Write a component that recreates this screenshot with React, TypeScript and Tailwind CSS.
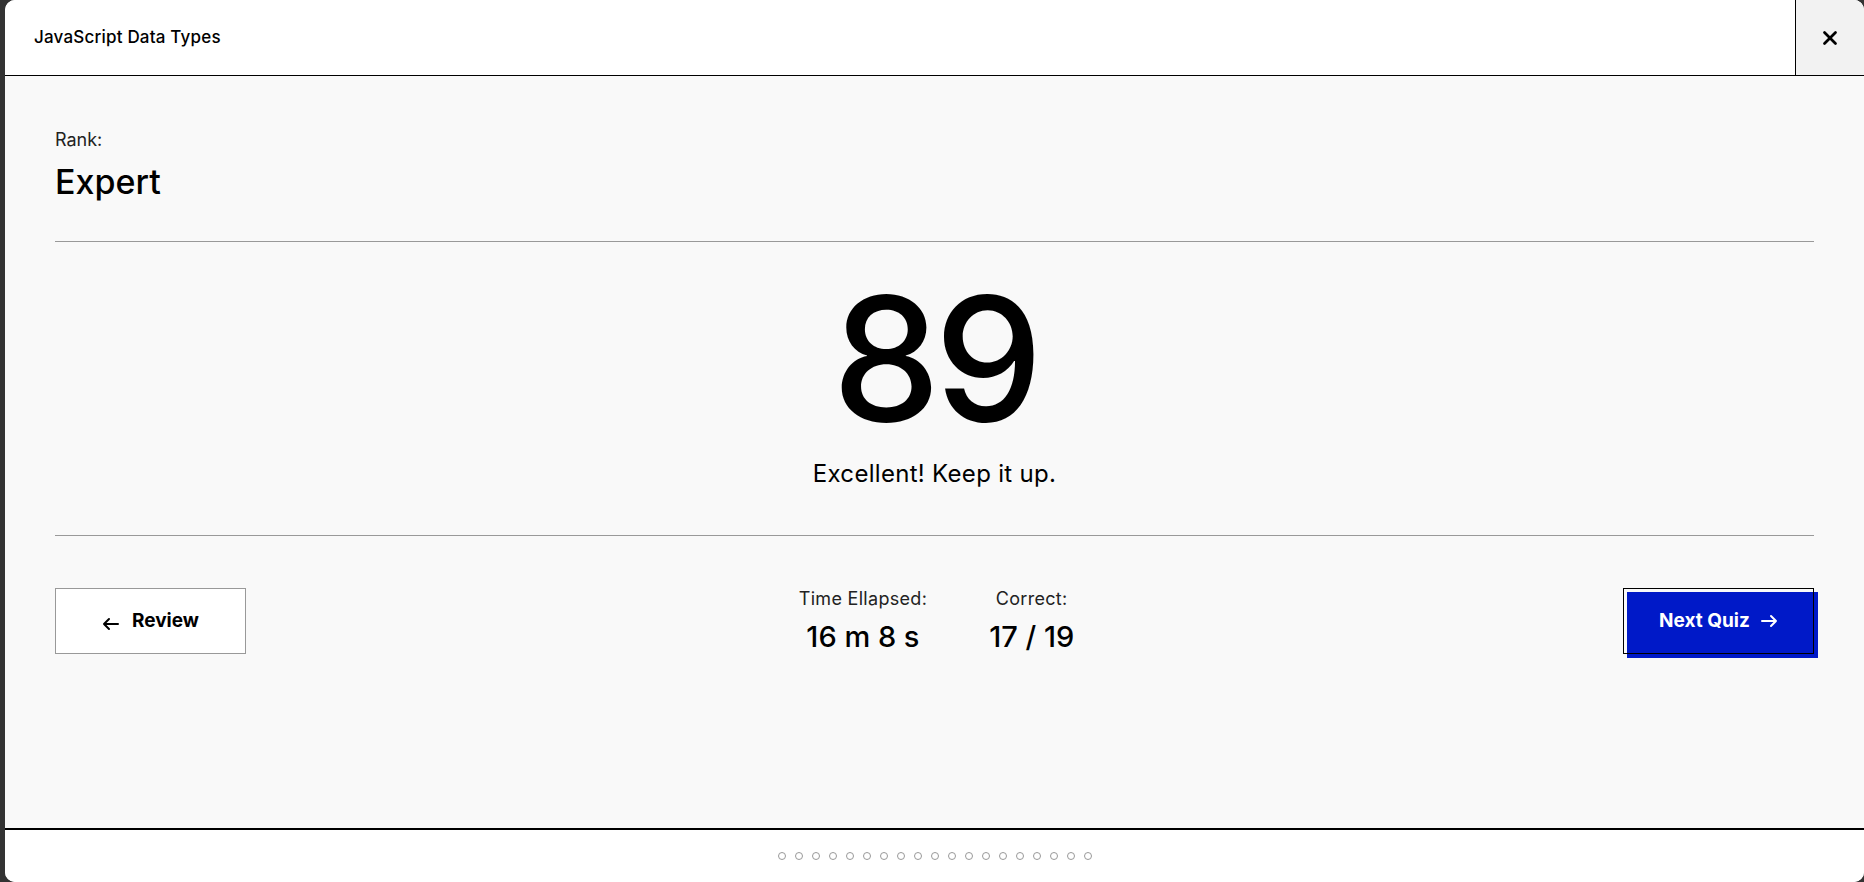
import { X } from "lucide-react";

const DOTS = Array.from({ length: 19 }, (_, i) => i);

function Arrow({ dir }: { dir: "left" | "right" }) {
  return (
    <svg
      width="18"
      height="14"
      viewBox="0 0 18 14"
      fill="none"
      stroke="currentColor"
      strokeWidth="2"
      strokeLinecap="round"
      strokeLinejoin="round"
      aria-hidden="true"
      className={dir === "left" ? "" : "rotate-180"}
    >
      <path d="M16 7H2M7 2L2 7l5 5" />
    </svg>
  );
}

function Stat({ label, value }: { label: string; value: string }) {
  return (
    <div className="flex flex-col items-center">
      <span className="text-[18px] leading-6 tracking-[0.3px] text-[#222]">
        {label}
      </span>
      <span className="mt-[8px] text-[29px] font-medium leading-9 text-black">
        {value}
      </span>
    </div>
  );
}

export default function App() {
  return (
    <div
      className="h-screen w-full bg-[#333] pl-[5px]"
      style={{ fontFamily: "Inter, 'Noto Sans', sans-serif" }}
    >
      <div className="flex h-full flex-col overflow-hidden rounded-[10px] bg-white">
        {/* header */}
        <header className="flex h-[76px] shrink-0 items-stretch border-b border-black bg-white">
          <div className="flex flex-1 items-center pl-[29px] text-[17px] font-medium tracking-[0.2px] text-black">
            JavaScript Data Types
          </div>
          <button className="flex w-[69px] items-center justify-center border-l border-black bg-[#f2f2f2] text-black">
            <X size={22} strokeWidth={3} />
          </button>
        </header>

        {/* body */}
        <main className="flex flex-1 flex-col bg-[#f9f9f9] px-[50px] pt-[52px]">
          <p className="text-[18px] leading-6 text-[#222]">Rank:</p>
          <h2 className="mt-[10px] text-[34px] font-medium leading-10 text-black">
            Expert
          </h2>

          <hr className="mt-[39px] border-t border-[#999]" />

          <section className="flex flex-col items-center pt-[30px]">
            <div className="text-[172px] font-medium leading-none tracking-[-6px] text-black">
              89
            </div>
            <p className="mt-[14px] text-[24px] leading-8 tracking-[0.3px] text-black">
              Excellent! Keep it up.
            </p>
          </section>

          <hr className="mt-[45px] border-t border-[#999]" />

          <section className="mt-[51px] grid grid-cols-3 items-center">
            <div>
              <button className="flex h-[66px] w-[191px] items-center justify-center gap-[12px] border border-[#999] bg-white text-[19px] font-bold text-black">
                <span className="mt-[5px]">
                  <Arrow dir="left" />
                </span>
                Review
              </button>
            </div>

            <div className="flex justify-center gap-[62px] pl-[4px]">
              <Stat label="Time Ellapsed:" value="16 m 8 s" />
              <Stat label="Correct:" value="17 / 19" />
            </div>

            <div className="flex justify-end">
              <div className="relative h-[66px] w-[191px]">
                <div className="absolute left-[4px] top-[4px] h-[66px] w-[191px] bg-[#0019c8]" />
                <button className="absolute inset-0 flex items-center justify-center gap-[10px] border border-black text-[19px] font-bold text-white">
                  Next Quiz
                  <Arrow dir="right" />
                </button>
              </div>
            </div>
          </section>
        </main>

        {/* footer */}
        <footer className="flex h-[54px] shrink-0 items-center justify-center gap-[9px] border-t-2 border-black bg-white">
          {DOTS.map((d) => (
            <span
              key={d}
              className="h-[8px] w-[8px] rounded-full border border-[#999]"
            />
          ))}
        </footer>
      </div>
    </div>
  );
}
